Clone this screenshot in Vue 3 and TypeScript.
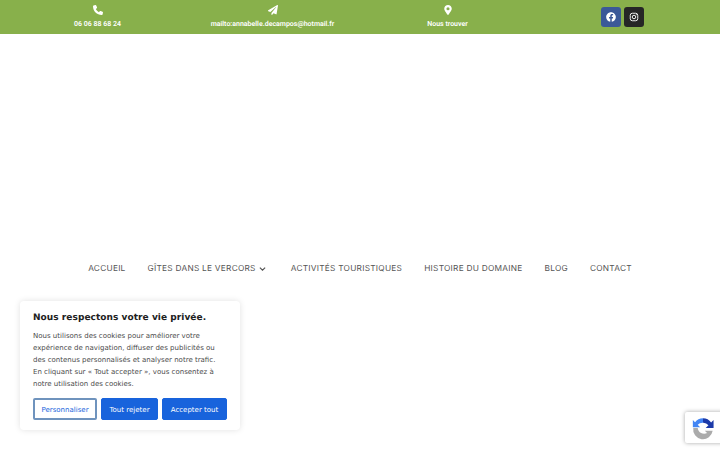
<script setup lang="ts">
interface Contact {
  label: string
  icon: 'phone' | 'plane' | 'pin'
}

const contacts: Contact[] = [
  { label: '06 06 88 68 24', icon: 'phone' },
  { label: 'mailto:annabelle.decampos@hotmail.fr', icon: 'plane' },
  { label: 'Nous trouver', icon: 'pin' },
]

const menu = [
  { label: 'Accueil' },
  { label: 'Gîtes dans le Vercors', caret: true },
  { label: 'Activités touristiques' },
  { label: 'Histoire du domaine' },
  { label: 'Blog' },
  { label: 'Contact' },
]
</script>

<template>
  <div class="page">
    <header class="topbar">
      <a v-for="item in contacts" :key="item.label" class="contact" href="#">
        <svg v-if="item.icon === 'phone'" class="contact-icon" viewBox="0 0 512 512">
          <path d="M164.900 24.600c-7.700-18.600-28-28.500-47.400-23.200l-88 24C12.100 30.200 0 46 0 64c0 247.400 200.600 448 448 448 18 0 33.800-12.100 38.600-29.500l24-88c5.300-19.400-4.600-39.700-23.200-47.400l-96-40c-16.300-6.800-35.200-2.100-46.300 11.600L304.700 368c-70.400-33.300-127.400-90.300-160.700-160.700l49.300-40.300c13.700-11.200 18.400-30 11.600-46.300l-40-96z" />
        </svg>
        <svg v-else-if="item.icon === 'plane'" class="contact-icon" viewBox="0 0 512 512">
          <path d="M476 3.200 12.500 270.600c-18.100 10.400-15.800 35.600 2.200 43.200L121 358.400l287.300-253.200c5.500-4.900 13.300 2.600 8.600 8.300L176 407v80.500c0 23.600 28.500 32.900 42.500 15.800L282 426l124.600 52.200c14.200 6 30.400-2.900 33-18.200l72-432C515 7.800 493.300-6.800 476 3.200z" />
        </svg>
        <svg v-else class="contact-icon" viewBox="0 0 384 512">
          <path fill-rule="evenodd" d="M172.300 501.700C27 291 0 252.600 0 192 0 86 86 0 192 0s192 86 192 192c0 60.600-27 99-172.300 309.700-9.500 13.800-29.900 13.800-39.400 0zM192 272a80 80 0 1 0 0-160 80 80 0 0 0 0 160z" />
        </svg>
        <span>{{ item.label }}</span>
      </a>
      <div class="socials">
        <a class="social facebook" href="#" aria-label="Facebook">
          <svg viewBox="0 0 512 512">
            <path d="M504 256C504 119 393 8 256 8S8 119 8 256c0 123.800 90.700 226.400 209.300 245V327.700h-63V256h63v-54.600c0-62.200 37-96.500 93.700-96.500 27.100 0 55.500 4.800 55.500 4.800v61h-31.300c-30.800 0-40.400 19.100-40.400 38.700V256h68.800l-11 71.700h-57.800V501C413.300 482.400 504 379.800 504 256z" />
          </svg>
        </a>
        <a class="social instagram" href="#" aria-label="Instagram">
          <svg viewBox="0 0 24 24" fill="none" stroke="currentColor" stroke-width="2.200">
            <rect x="3" y="3" width="18" height="18" rx="5" />
            <circle cx="12" cy="12" r="4.200" />
            <circle cx="17.400" cy="6.600" r="0.700" fill="currentColor" stroke-width="1" />
          </svg>
        </a>
      </div>
    </header>

    <nav class="menu">
      <a v-for="item in menu" :key="item.label" class="menu-link" href="#">
        {{ item.label }}
        <svg v-if="item.caret" class="caret" viewBox="0 0 12 8" fill="none">
          <path d="M1.500 1.500 6 6l4.500-4.500" />
        </svg>
      </a>
    </nav>

    <aside class="cookies">
      <h2>Nous respectons votre vie privée.</h2>
      <p>
        Nous utilisons des cookies pour améliorer votre expérience de navigation, diffuser des
        publicités ou des contenus personnalisés et analyser notre trafic. En cliquant sur « Tout
        accepter », vous consentez à notre utilisation des cookies.
      </p>
      <div class="cookie-actions">
        <button class="outline" type="button">Personnaliser</button>
        <button type="button">Tout rejeter</button>
        <button type="button">Accepter tout</button>
      </div>
    </aside>

    <div class="recaptcha">
      <svg viewBox="0 0 32 32">
        <path fill="#1c3aa9" d="M16 4a12 12 0 0 1 10 5.300l3-3V16H19.300l3.400-3.400A8 8 0 0 0 16 9.500z" />
        <path fill="#4285f4" d="M16 4a12 12 0 0 0-9.800 5L3.500 6.300V15h9l-3-3A8 8 0 0 1 16 9.500z" />
        <path fill="#ababab" d="M4 16h5.500a8 8 0 0 0 11.500 6.300l-2.800-2.800H28l-.1 0A12 12 0 0 1 4 16z" />
      </svg>
    </div>
  </div>
</template>

<style scoped>
.page {
  background: #ffffff;
  height: 450px;
  overflow: hidden;
  position: relative;
  text-rendering: geometricPrecision;
  width: 720px;
}

.topbar {
  background: #88b04b;
  box-sizing: border-box;
  display: grid;
  grid-template-columns: repeat(4, 175px);
  height: 34px;
  padding: 0 10px;
}

.contact {
  align-items: center;
  color: #ffffff;
  display: flex;
  flex-direction: column;
  font-family: Roboto, sans-serif;
  font-size: 7px;
  font-weight: 600;
  gap: 5px;
  padding-top: 5px;
  text-decoration: none;
}

.contact-icon {
  fill: #ffffff;
  height: 10px;
  width: 10px;
}

.socials {
  align-items: center;
  display: flex;
  gap: 3px;
  justify-content: center;
  padding-bottom: 1px;
}

.social {
  align-items: center;
  border-radius: 3px;
  color: #ffffff;
  display: flex;
  height: 20px;
  justify-content: center;
  width: 20px;
}

.social svg {
  fill: currentColor;
  height: 10px;
  width: 10px;
}

.instagram svg {
  fill: none;
}

.facebook {
  background: #3b5998;
}

.instagram {
  background: #262626;
}

.menu {
  display: flex;
  gap: 22px;
  justify-content: center;
  margin-top: 229px;
}

.menu-link {
  align-items: center;
  color: #555555;
  display: flex;
  font-family: Inter, sans-serif;
  font-size: 8.3px;
  gap: 3px;
  height: 12px;
  letter-spacing: 0.25px;
  text-decoration: none;
  text-transform: uppercase;
}

.caret {
  height: 6px;
  margin-right: 3px;
  width: 7px;
}

.caret path {
  stroke: #555555;
  stroke-width: 2;
}

.cookies {
  background: #ffffff;
  border-radius: 4px;
  box-shadow: 0 0 6px rgba(0, 0, 0, 0.12);
  box-sizing: border-box;
  height: 129px;
  left: 20px;
  padding: 11px 13px;
  position: absolute;
  top: 301px;
  width: 220px;
}

.cookies h2 {
  color: #212121;
  font-family: 'DejaVu Sans', sans-serif;
  font-size: 9px;
  font-weight: 700;
  letter-spacing: 0.05px;
  line-height: 12px;
  margin: 0 0 6px;
}

.cookies p {
  color: #4a4a4a;
  font-family: 'DejaVu Sans', sans-serif;
  font-size: 7.03px;
  line-height: 12px;
  margin: 0 0 8px;
  max-width: 188px;
}

.cookie-actions {
  display: flex;
  gap: 4px;
}

.cookie-actions button {
  background: #1863dc;
  border: 1px solid #1863dc;
  border-radius: 2px;
  color: #ffffff;
  flex: none;
  font-family: 'DejaVu Sans', sans-serif;
  font-size: 7.03px;
  height: 22px;
  padding: 0;
  width: 57px;
}

.cookie-actions button:last-child {
  width: 65px;
}

.cookie-actions .outline {
  background: #ffffff;
  border: 2px solid #6f93bd;
  color: #1863dc;
  width: 64px;
}

.recaptcha {
  align-items: center;
  background: #ffffff;
  border-radius: 2px 0 0 2px;
  box-shadow: 0 0 4px rgba(0, 0, 0, 0.35);
  display: flex;
  height: 31px;
  left: 685px;
  padding-left: 5px;
  position: absolute;
  top: 412px;
  width: 40px;
}

.recaptcha svg {
  height: 26px;
  width: 26px;
}
</style>
